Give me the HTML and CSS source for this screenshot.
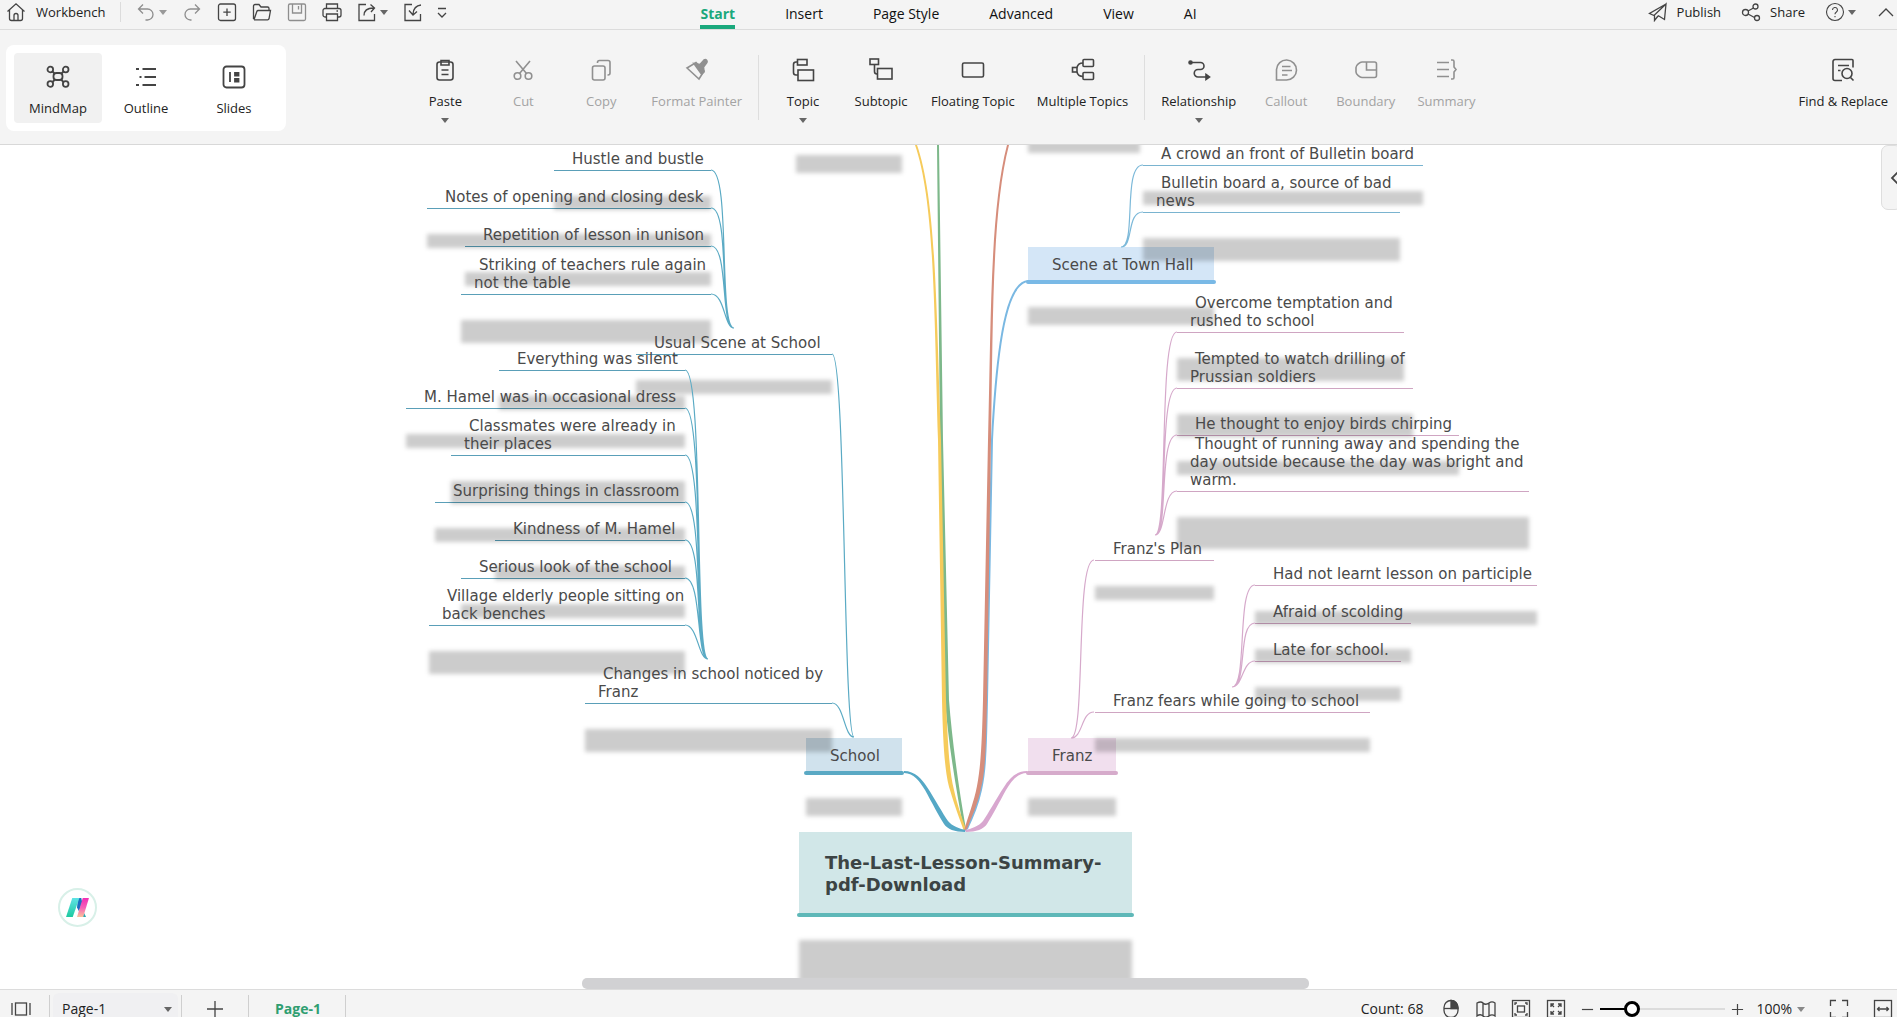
FILE: index.html
```html
<!DOCTYPE html>
<html lang="en">
<head>
<meta charset="utf-8">
<meta name="viewport" content="width=device-width, initial-scale=1">
<title>The-Last-Lesson-Summary-pdf-Download</title>
<link rel="stylesheet" href="styles.css">
</head>
<body>
<header class="topbar">
  <div class="quick">
    <button class="link-btn"><svg class="icon" viewBox="0 0 20 20"><path d="M1.5 9.500 10 1.800l8.500 7.700M3.500 8v8.500a2 2 0 0 0 2 2h9a2 2 0 0 0 2-2V8M8 18.500v-5a2 2 0 0 1 4 0v5"/></svg>Workbench</button>
    <span class="divider"></span>
    <span class="pair muted"><button class="icon-btn" aria-label="Undo"><svg class="icon" viewBox="0 0 20 20"><path d="M7 2.500 2.500 7 7 11.500M2.500 7h9a5.500 5.500 0 0 1 0 11H9.500"/></svg></button><i class="caret"></i></span>
    <button class="icon-btn muted" aria-label="Redo"><svg class="icon" viewBox="0 0 20 20"><path d="M13 2.500 17.500 7 13 11.500M17.500 7h-9a5.500 5.500 0 0 0 0 11h1"/></svg></button>
    <button class="icon-btn" aria-label="New"><svg class="icon" viewBox="0 0 20 20"><rect x="1.500" y="2" width="17" height="16.500" rx="2"/><path d="M10 6.500v7.500M6.300 10.200h7.400"/></svg></button>
    <button class="icon-btn" aria-label="Open"><svg class="icon" viewBox="0 0 20 20"><path d="M1.500 17V4a1.500 1.500 0 0 1 1.500-1.500h4l2 2.500h6.500A1.500 1.500 0 0 1 17 6.500v2M2 17.800 4.800 9.500a1.500 1.500 0 0 1 1.400-1h12.300L17 16.800a1.500 1.500 0 0 1-1.500 1H2"/></svg></button>
    <button class="icon-btn muted" aria-label="Save"><svg class="icon" viewBox="0 0 20 20"><rect x="1.500" y="2" width="17" height="16.500" rx="1.500"/><path d="M5.500 2v9h9V2M11.500 4v3.500"/></svg></button>
    <button class="icon-btn" aria-label="Print"><svg class="icon" viewBox="0 0 20 20"><path d="M4.500 6.500V2h11v4.500M4.500 15H3a2 2 0 0 1-2-2V8.500a2 2 0 0 1 2-2h14a2 2 0 0 1 2 2V13a2 2 0 0 1-2 2h-1.500M4.500 12h11v6.500h-11zM14.500 9h1.500"/></svg></button>
    <span class="pair"><button class="icon-btn" aria-label="Export"><svg class="icon" viewBox="0 0 20 20"><path d="M9 2.500H2v16h15.500V12M7 13.500c0-5 3.500-7.500 9.500-7.500M13.500 2.500 17.500 6l-3.500 4"/></svg></button><i class="caret"></i></span>
    <button class="icon-btn" aria-label="Import"><svg class="icon" viewBox="0 0 20 20"><path d="M9 2.500H2v16h15.500V12M18 3c-5 .5-7.500 3-8 9M6 8.500l4 4.500 4-3.500"/></svg></button>
    <button class="icon-btn more" aria-label="More"><svg class="icon" viewBox="0 0 20 20"><path d="M6 6.500h8M6 11l4 4 4-4"/></svg></button>
  </div>
  <nav class="tabs">
    <a class="tab active" href="#start">Start</a>
    <a class="tab" href="#insert">Insert</a>
    <a class="tab" href="#page-style">Page Style</a>
    <a class="tab" href="#advanced">Advanced</a>
    <a class="tab" href="#view">View</a>
    <a class="tab" href="#ai">AI</a>
  </nav>
  <div class="account">
    <button class="link-btn"><svg class="icon" viewBox="0 0 20 20"><path d="M18 2 1.500 11.500l4.500 2L18 2l-1.500 15.500-6.500-4M6.500 13.500v5l3.500-4.500"/></svg>Publish</button>
    <button class="link-btn"><svg class="icon" viewBox="0 0 20 20"><circle cx="4.500" cy="10.500" r="3"/><circle cx="14.500" cy="4.500" r="2.500"/><circle cx="16" cy="16" r="2.500"/><path d="m7 9 5.500-3M7 12l6.500 3.500"/></svg>Share</button>
    <span class="pair"><button class="icon-btn" aria-label="Help"><svg class="icon thin" viewBox="0 0 20 20"><circle cx="10" cy="10" r="8.500"/><path d="M7.500 8a2.500 2.500 0 1 1 3.700 2.200c-.8.500-1.200.9-1.200 2M10 14v1.200"/></svg></button><i class="caret"></i></span>
    <button class="icon-btn" aria-label="Collapse ribbon"><svg class="icon" viewBox="0 0 20 20"><path d="m3 14 7-7 7 7"/></svg></button>
  </div>
</header>

<section class="ribbon">
  <div class="side">
    <div class="modes">
      <button class="mode active"><svg class="icon heavy" viewBox="0 0 24 24"><rect x="7.500" y="8" width="9" height="7" rx="3"/><circle cx="4.300" cy="4.500" r="2.800"/><circle cx="19.700" cy="4.500" r="2.800"/><circle cx="4.300" cy="19" r="2.800"/><circle cx="19.700" cy="19" r="2.800"/><path d="m6.500 6.500 2.500 2.500M17.500 6.500 15 9M6.500 17 9 14.500M17.500 17 15 14.500"/></svg>MindMap</button>
      <button class="mode"><svg class="icon heavy" viewBox="0 0 24 24"><path d="M2 4h3M8.500 4H22M5.500 12h2M10.500 12H22M2 20h3M8.500 20H22"/></svg>Outline</button>
      <button class="mode"><svg class="icon heavy" viewBox="0 0 24 24"><rect x="1.500" y="1.500" width="21" height="21" rx="3"/><path d="M8 7v10"/><path class="solid" d="M13 8h3.500v2.500H13zM13 14h3.500v2.500H13z"/></svg>Slides</button>
    </div>
  </div>
  <div class="tools">
    <button class="tool"><svg class="icon" viewBox="0 0 24 24"><rect x="4" y="4" width="16" height="18" rx="2.500"/><path d="M8 2.500h8V7H8zM8.500 12h7M8.500 16.500h7"/></svg>Paste<i class="caret"></i></button>
    <button class="tool" disabled><svg class="icon" viewBox="0 0 24 24"><circle cx="6.500" cy="18" r="3.300"/><circle cx="17.500" cy="18" r="3.300"/><path d="m5 3 10.500 12.500M19 3 8.500 15.500"/></svg>Cut</button>
    <button class="tool" disabled><svg class="icon" viewBox="0 0 24 24"><rect x="3.500" y="8" width="12.500" height="14" rx="2"/><path d="M8.500 5V4.500a2 2 0 0 1 2-2H19a2 2 0 0 1 2 2V15a2 2 0 0 1-2 2h-.5"/></svg>Copy</button>
    <button class="tool" disabled><svg class="icon" viewBox="0 0 24 24"><path d="m2 10 9-5.500 8 8.500-5 8z"/><path class="solid" d="m9 5.500 6 1L19 2c2-1.500 4 1 2.500 3L18.500 9l.5 5-2.500 2z"/></svg>Format Painter</button>
    <span class="tool-divider"></span>
    <button class="tool"><svg class="icon" viewBox="0 0 24 24"><rect x="6.500" y="1.500" width="9.500" height="5.500"/><rect x="7" y="12" width="15.500" height="10.500"/><path d="M6.500 4H5a2.500 2.500 0 0 0-2.500 2.500v8A2.500 2.500 0 0 0 5 17h2"/></svg>Topic<i class="caret"></i></button>
    <button class="tool"><svg class="icon" viewBox="0 0 24 24"><rect x="1" y="1" width="8.500" height="5.500"/><rect x="8.500" y="10.500" width="14.500" height="10.500"/><path d="M5.500 6.500v7a2.500 2.500 0 0 0 2.500 2.500h.5"/></svg>Subtopic</button>
    <button class="tool"><svg class="icon" viewBox="0 0 24 24"><rect x="1.500" y="5" width="21" height="14" rx="1.500"/></svg>Floating Topic</button>
    <button class="tool"><svg class="icon" viewBox="0 0 24 24"><rect x="12" y="1.500" width="10.500" height="7" rx="1"/><rect x="12" y="14.500" width="10.500" height="7" rx="1"/><rect x="1.500" y="9.500" width="4.500" height="4.500"/><path d="M12 5C7.500 5 6.500 7 6 9.500M12 18.500c-4.500 0-5.500-2-6-4.500"/></svg>Multiple Topics</button>
    <span class="tool-divider"></span>
    <button class="tool"><svg class="icon" viewBox="0 0 24 24"><path d="M3.500 4.500h10a3.500 3.500 0 0 1 0 7H11a3.700 3.700 0 0 0 0 7.500h10"/><circle class="solid" cx="3.500" cy="4.500" r="1.500"/><path class="solid" d="m19 16.500 3.500 2.500-3.500 2.500z"/></svg>Relationship<i class="caret"></i></button>
    <button class="tool" disabled><svg class="icon" viewBox="0 0 24 24"><path d="M2.500 22V11.500A10 10 0 1 1 12.500 22zM8 8.500h8.500M8 12.500h10M8 17h5.500"/></svg>Callout</button>
    <button class="tool" disabled><svg class="icon" viewBox="0 0 24 24"><path d="M8 4h12.500a2 2 0 0 1 2 2v11.500a2 2 0 0 1-2 2H8c-2 0-6-3-6-5.500V9.500C2 7 6 4 8 4zM12.500 4v8h10"/></svg>Boundary</button>
    <button class="tool" disabled><svg class="icon" viewBox="0 0 24 24"><path d="M2 4.500h12M2 11.500h12M2 18.500h12M16 2h1.500A1.500 1.500 0 0 1 19 3.500V9l2 2.500-2 2.500v5.500a1.500 1.500 0 0 1-1.500 1.500H16"/></svg>Summary</button>
  </div>
  <div class="side end">
    <button class="tool find"><svg class="icon heavy" viewBox="0 0 24 24"><path d="M11 22.500H4A2 2 0 0 1 2 20.500v-17a2 2 0 0 1 2-2h17a1 1 0 0 1 1 1v7M7 7.500h11M7 12.500h2.500"/><circle cx="16" cy="15.500" r="5"/><path d="m19.500 19.500 3 3"/></svg>Find &amp; Replace</button>
  </div>
</section>

<main class="canvas">
  <div class="stage">
    <svg class="links" viewBox="348 145 1201 844" aria-hidden="true">
      <g class="teal">
        <path d="M711 170C731 170 718 328 734 328M711 208C731 208 718 328 734 328M711 246C729 246 720 328 734 328M711 294C725 294 724 328 734 328"/>
        <path d="M685 370C704 370 694 659 708 659M685 408C704 408 694 659 708 659M685 455C704 455 694 659 708 659M685 502C704 502 694 659 708 659M685 540C704 540 694 659 708 659M685 578C702 578 696 659 708 659M685 625C698 625 698 659 708 659"/>
        <path d="M832 354C846 354 843 737 854 737M832 703C844 703 844 737 854 737"/>
      </g>
      <g class="sky">
        <path d="M1143 165C1122 165 1137 247 1121 247M1143 212C1126 212 1134 247 1121 247"/>
      </g>
      <g class="pink">
        <path d="M1177 332C1158 332 1169 535 1155 535M1177 388C1158 388 1169 535 1155 535M1177 435C1158 435 1169 535 1155 535M1177 491C1162 491 1166 535 1155 535"/>
        <path d="M1255 585C1236 585 1248 687 1232 687M1255 623C1237 623 1248 687 1232 687M1255 661C1242 661 1243 687 1232 687"/>
        <path d="M1094 560C1075 560 1086 738 1071 738M1094 712C1081 712 1083 738 1071 738"/>
      </g>
      <path class="sky-fill" d="M1028 280C1004 282 996 350 991 440L985 700C984 740 984 765 979 790C976 802 970 816 965 831L968 829C974 816 979 804 982 790C987 768 987 740 988 700L993 440C998 350 1006 285 1028 282Z"/>
      <path class="green-fill" d="M937 145L940 440L945 700C948 740 956 790 964 831L966 829C959 790 952 740 949 700L943 440L939 145Z"/>
      <path class="yellow-fill" d="M915 145C934 200 934 300 938 440L942 700C943 745 945 775 950 790C954 804 960 820 964 831L966 829C962 818 957 804 954 790C949 770 948 745 946 700L941 440C936 300 936 200 917 145Z"/>
      <path class="red-fill" d="M1007 145C990 210 991 320 988 440L983 700C982 740 981 765 977 786C974 802 968 816 964 831L967 829C972 816 978 804 981 788C986 768 986 740 987 700L991 440C993 320 992 210 1009 145Z"/>
      <path class="teal-fill" d="M904 771C915 771 922 779 927 787C935 799 943 814 948 821C952 826 960 829 966 830L965 832C955 832 947 829 944 824C939 816 932 803 925 790C920 782 914 773 904 773Z"/>
      <path class="pink-fill" d="M1027 771C1016 771 1009 779 1004 787C996 799 988 814 983 821C979 826 971 829 965 830L966 832C976 832 984 829 987 824C992 816 999 803 1006 790C1011 782 1017 773 1027 773Z"/>
    </svg>

    <div class="ghost" style="left:448px;top:10px;width:106px"></div>
    <div class="ghost" style="left:680px;top:-10px;width:112px"></div>

    <div class="node teal" style="left:206px;top:-3px;width:157px"><p>Hustle and bustle</p></div>
    <div class="node teal" style="left:79px;top:35px;width:284px"><p>Notes of opening and closing desk</p></div>
    <div class="node teal" style="left:117px;top:73px;width:246px"><p>Repetition of lesson in unison</p></div>
    <div class="node teal" style="left:113px;top:103px;width:250px"><p>Striking of teachers rule again<br>not the table</p></div>
    <div class="node teal" style="left:288px;top:181px;width:196px"><p>Usual Scene at School</p></div>
    <div class="node teal" style="left:151px;top:197px;width:186px"><p>Everything was silent</p></div>
    <div class="node teal" style="left:58px;top:235px;width:279px"><p>M. Hamel was in occasional dress</p></div>
    <div class="node teal" style="left:103px;top:264px;width:234px"><p>Classmates were already in<br>their places</p></div>
    <div class="node teal" style="left:87px;top:329px;width:250px"><p>Surprising things in classroom</p></div>
    <div class="node teal" style="left:147px;top:367px;width:190px"><p>Kindness of M. Hamel</p></div>
    <div class="node teal" style="left:113px;top:405px;width:224px"><p>Serious look of the school</p></div>
    <div class="node teal" style="left:81px;top:434px;width:256px"><p>Village elderly people sitting on<br>back benches</p></div>
    <div class="node teal" style="left:237px;top:512px;width:247px"><p>Changes in school noticed by<br>Franz</p></div>

    <div class="node sky" style="left:795px;top:-8px;width:280px"><p>A crowd an front of Bulletin board</p></div>
    <div class="node sky" style="left:795px;top:21px;width:257px"><p>Bulletin board a, source of bad<br>news</p></div>
    <div class="node pink" style="left:829px;top:141px;width:227px"><p>Overcome temptation and<br>rushed to school</p></div>
    <div class="node pink" style="left:829px;top:197px;width:236px"><p>Tempted to watch drilling of<br>Prussian soldiers</p></div>
    <div class="node pink" style="left:829px;top:262px;width:282px"><p>He thought to enjoy birds chirping</p></div>
    <div class="node pink" style="left:829px;top:282px;width:352px"><p>Thought of running away and spending the<br>day outside because the day was bright and<br>warm.</p></div>
    <div class="node pink" style="left:747px;top:387px;width:119px"><p>Franz's Plan</p></div>
    <div class="node pink" style="left:907px;top:412px;width:282px"><p>Had not learnt lesson on participle</p></div>
    <div class="node pink" style="left:907px;top:450px;width:156px"><p>Afraid of scolding</p></div>
    <div class="node pink" style="left:907px;top:488px;width:146px"><p>Late for school.</p></div>
    <div class="node pink" style="left:747px;top:539px;width:275px"><p>Franz fears while going to school</p></div>

    <div class="box school" style="left:458px;top:593px;width:96px"><p>School</p></div>
    <div class="box franz" style="left:680px;top:593px;width:88px"><p>Franz</p></div>
    <div class="box town" style="left:680px;top:102px;width:186px"><p>Scene at Town Hall</p></div>
    <div class="box root" style="left:451px;top:687px;width:333px"><h1>The-Last-Lesson-Summary-<br>pdf-Download</h1></div>
  </div>

  <button class="panel-handle" aria-label="Open side panel"><svg class="icon heavy" viewBox="0 0 20 20"><path d="m13 4-6 6 6 6"/></svg></button>
  <button class="assistant" aria-label="AI assistant">
    <svg viewBox="0 0 26 22"><defs>
      <linearGradient id="g1" x1="0" y1="0" x2="0" y2="1"><stop offset="0" stop-color="#5fe3e6"/><stop offset="1" stop-color="#1fc9a0"/></linearGradient>
      <linearGradient id="g2" x1="0" y1="0" x2="0" y2="1"><stop offset="0" stop-color="#f02fb4"/><stop offset=".5" stop-color="#f560b8"/><stop offset="1" stop-color="#fbc39a"/></linearGradient></defs>
      <path d="M13.500 1h3.500l1 5-3.500 9-2-4z" fill="#1b6fc0"/><path d="m19.500 16 2.500 5h-5z" fill="#2aa7b0"/>
      <path d="M7.500 1H15L8 21H1z" fill="url(#g1)"/><path d="M18.500 1H25l-6 20h-6.500z" fill="url(#g2)"/></svg>
  </button>
  <div class="scrollbar"></div>
</main>

<footer class="status">
  <div class="status-row">
    <button class="icon-btn" aria-label="Pages panel"><svg class="icon" viewBox="0 0 20 20"><rect x="4.500" y="4" width="11" height="12"/><path d="M1 4v12M19 4v12"/></svg></button>
    <span class="bar-sep first"></span>
    <label class="page-pick"><select aria-label="Page"><option>Page-1</option></select><i class="caret"></i></label>
    <span class="bar-sep"></span>
    <button class="add" aria-label="Add page"><svg class="icon" viewBox="0 0 20 20"><path d="M10 2v16M2 10h16"/></svg></button>
    <span class="bar-sep"></span>
    <button class="page-tab">Page-1</button>
    <span class="bar-sep"></span>
    <div class="status-end">
      <span class="count">Count: 68</span>
      <button class="icon-btn" aria-label="Mouse mode"><svg class="icon" viewBox="0 0 20 20"><rect x="3" y="1.500" width="14" height="17" rx="7"/><path d="M3 9.500h14"/><path class="solid" d="M10 1.500c4 0 7 3 7 8h-7z"/></svg></button>
      <button class="icon-btn" aria-label="Overview"><svg class="icon" viewBox="0 0 20 20"><path d="M1 4c3-1.500 4.500-1.500 6 0s4 1.500 6 0 4-1.500 6 0v13c-2-1.500-4-1.500-6 0s-4.500 1.500-6 0-4-1.500-6 0zM7 4v13M13 4v13"/></svg></button>
      <button class="icon-btn" aria-label="Fit page"><svg class="icon" viewBox="0 0 20 20"><rect x="1.500" y="1.500" width="17" height="17"/><rect x="6.500" y="7" width="7" height="6"/><path d="M4 6V4h2M14 4h2v2M16 14v2h-2M6 16H4v-2"/></svg></button>
      <button class="icon-btn" aria-label="Fit map"><svg class="icon" viewBox="0 0 20 20"><rect x="1.500" y="1.500" width="17" height="17"/><path d="M5 8V5h3M5 5l3 3M12 5h3v3M15 5l-3 3M15 12v3h-3M15 15l-3-3M8 15H5v-3M5 15l3-3"/></svg></button>
      <span class="zoom">
        <button class="step" aria-label="Zoom out"><svg class="icon" viewBox="0 0 14 14"><path d="M1 7h12"/></svg></button>
        <input type="range" min="0" max="100" value="22" aria-label="Zoom">
        <button class="step" aria-label="Zoom in"><svg class="icon" viewBox="0 0 14 14"><path d="M1 7h12M7 1v12"/></svg></button>
      </span>
      <button class="zoom-value">100%<i class="caret"></i></button>
      <button class="icon-btn wide" aria-label="Full screen"><svg class="icon" viewBox="0 0 20 20"><path d="M1.500 7V1.500H7M13 1.500h5.500V7M18.500 13v5.500H13M7 18.500H1.500V13"/></svg></button>
      <button class="icon-btn" aria-label="Fit width"><svg class="icon" viewBox="0 0 20 20"><rect x="1.500" y="1.500" width="17" height="17"/><path d="M4.500 10h11M6.500 8l-2 2 2 2M13.500 8l2 2-2 2"/></svg></button>
    </div>
  </div>
</footer>
</body>
</html>
```

FILE: styles.css
```css
* { box-sizing: border-box; }

body {
  margin: 0;
  height: 100vh;
  display: flex;
  flex-direction: column;
  overflow: hidden;
  background: #fff;
  color: #222;
  font: 13px/18px "Open Sans", "Noto Sans", sans-serif;
}

button, select {
  margin: 0;
  padding: 0;
  border: 0;
  background: none;
  color: inherit;
  font: inherit;
}

p, h1 { margin: 0; }

.icon {
  display: block;
  width: 20px;
  height: 20px;
  flex: none;
  fill: none;
  stroke: currentColor;
  stroke-width: 1.3;
  color: #444;
}
.icon.thin { stroke-width: 1.1; }
.icon.heavy { stroke-width: 1.8; }
.icon .solid { fill: currentColor; }
.muted .icon { color: #8e8e8e; }
.muted .caret { border-top-color: #999; }

.caret {
  display: block;
  width: 0;
  height: 0;
  border: 4px solid transparent;
  border-top: 5px solid #666;
  border-bottom: 0;
}

/* Top bar */
.topbar {
  flex: none;
  display: grid;
  grid-template-columns: 1fr auto 1fr;
  height: 30px;
  background: #f4f4f4;
  border-bottom: 1px solid #dcdcdc;
}
.quick, .account {
  display: flex;
  align-items: center;
  padding-bottom: 5px;
}
.quick { gap: 15px; padding-left: 6px; }
.account { gap: 20px; justify-content: flex-end; padding-right: 1px; }
.link-btn { display: flex; align-items: center; gap: 10px; }
.account .link-btn { gap: 9px; }
.divider { width: 1px; height: 20px; background: #dcdcdc; }
.pair { display: flex; align-items: center; gap: 3px; }
.more { margin-left: -6px; }
.tabs { display: flex; gap: 50px; }
.tab {
  padding-top: 5px;
  color: #111;
  font-size: 14px;
  text-decoration: none;
}
.tab.active {
  color: #1aa87c;
  font-weight: 700;
  border-bottom: 4px solid #1aa87c;
  border-radius: 3px 3px 0 0;
}

/* Ribbon */
.ribbon {
  flex: none;
  display: grid;
  grid-template-columns: 1fr auto 1fr;
  height: 115px;
  background: #f4f4f4;
  border-bottom: 1px solid #d8d8d8;
}
.side { display: flex; align-items: flex-start; padding: 15px 9px 0 6px; }
.side.end { justify-content: flex-end; padding-top: 0; }
.modes {
  display: flex;
  padding: 8px;
  background: #fff;
  border-radius: 8px;
}
.mode {
  display: flex;
  flex-direction: column;
  align-items: center;
  gap: 10px;
  width: 88px;
  height: 70px;
  padding-top: 12px;
  border-radius: 4px;
}
.mode .icon, .tool .icon { width: 24px; height: 24px; }
.mode.active { background: #f1f1f1; }
.tools { display: flex; padding-right: 4px; }
.tool {
  display: flex;
  flex-direction: column;
  align-items: center;
  gap: 10px;
  min-width: 78px;
  padding: 28px 11px 0;
  white-space: nowrap;
}
.tool .icon { stroke-width: 1.6; }
.tool .caret { margin-top: -2px; }
.tool:disabled { color: #a3a3a3; }
.tool:disabled .icon { color: #909090; }
.tool.find { padding: 28px 0 0; }
.tool-divider { width: 1px; height: 65px; margin: 25px 5px 0; background: #dedede; }

/* Canvas */
.canvas {
  position: relative;
  flex: 1;
  display: flex;
  justify-content: center;
  overflow: hidden;
  background: #fff;
}
.stage {
  position: relative;
  flex: none;
  width: 1201px;
  color: #444;
  font: 15px/18px "DejaVu Sans", sans-serif;
}
.links {
  position: absolute;
  z-index: 2;
  left: 0;
  top: 0;
  width: 1201px;
  height: 844px;
  fill: none;
  stroke-width: 1.2;
}
.links .teal { stroke: #5aaac4; }
.links .sky { stroke: #7cb9d9; }
.links .pink { stroke: #d6a9cb; }
.teal-fill { fill: #55a8c6; }
.sky-fill { fill: #7ab8e2; }
.pink-fill { fill: #d8a7cf; }
.green-fill { fill: #7db88a; }
.yellow-fill { fill: #f6cb5b; }
.red-fill { fill: #d68d7b; }

.node, .box, .ghost { position: absolute; white-space: nowrap; }
.node {
  padding: 8px 13px 2px;
  border-bottom: 1px solid;
  text-indent: 5px;
}
.node p, .box p, .box h1 { position: relative; z-index: 2; color: #4a4a4a; }
.node.teal { border-color: #5a9fb8; }
.node.sky { border-color: #7ab4d0; }
.node.pink { border-color: #cfa5c2; }

/* Drop shadows lie over the filled boxes but under links and text */
.node::after, .box::after, .ghost::after {
  content: "";
  position: absolute;
  z-index: 1;
  left: 0;
  top: calc(100% + 26px);
  width: 100%;
  height: 50%;
  background: rgba(0, 0, 0, .2);
  filter: blur(2px);
}
.box::after { top: calc(100% + 25px); }
.ghost { height: 18px; }
.ghost::after { top: 0; height: 100%; }

.box { height: 35px; padding: 9px 24px; }
.box::before {
  content: "";
  position: absolute;
  left: -2px;
  right: -2px;
  bottom: -2px;
  height: 4px;
  border-radius: 2px;
  background: var(--line);
}
.box.school { background: #d0e2ed; --line: #5aa9c4; }
.box.franz { background: #f1dfee; --line: #d6abcb; }
.box.town { background: #d4e6f7; --line: #79b9e6; }
.box.root { height: 83px; padding: 20px 26px; background: #d1e7e8; --line: #5eb8b8; }
.box.root h1 { font-size: 18px; line-height: 22px; font-weight: 700; color: #3c4444; }

.scrollbar {
  position: absolute;
  left: 582px;
  right: 588px;
  bottom: 0;
  z-index: 3;
  height: 11px;
  border-radius: 5px;
  background: #d1d1d3;
}
.panel-handle {
  position: absolute;
  right: -5px;
  top: 0;
  width: 21px;
  height: 65px;
  padding-left: 3px;
  border: 1px solid #dedede;
  border-radius: 7px;
  background: #f4f4f4;
}
.assistant {
  position: absolute;
  left: 58px;
  bottom: 62px;
  display: flex;
  align-items: center;
  justify-content: center;
  width: 39px;
  height: 39px;
  border: 2px solid #d8f0e8;
  border-radius: 50%;
  background: #fff;
}
.assistant svg { width: 25px; height: 21px; flex: none; }

/* Status bar */
.status {
  flex: none;
  height: 28px;
  overflow: hidden;
  background: #f4f4f4;
  border-top: 1px solid #dcdcdc;
  font-size: 14px;
  line-height: 16px;
}
.status-row {
  display: flex;
  align-items: center;
  height: 38px;
  padding: 0 4px 0 11px;
}
.bar-sep { width: 1px; height: 28px; background: #cfcfcf; }
.bar-sep.first { margin-left: 18px; }
.page-pick {
  display: flex;
  align-items: center;
  width: 125px;
  height: 32px;
  margin: 0 3px;
  padding-left: 9px;
  border-radius: 6px;
  background: #f0f0f2;
}
.page-pick select { appearance: none; flex: 1; outline: 0; color: #222; }
.page-pick .caret { margin-right: 6px; }
.add { width: 66px; display: flex; justify-content: center; }
.page-tab { padding: 0 24px 0 26px; color: #2f9e70; font-weight: 700; }
.status-end {
  flex: 1;
  display: flex;
  align-items: center;
  justify-content: flex-end;
  gap: 15px;
}
.count { margin-right: 3px; }
.zoom { display: flex; align-items: center; gap: 6px; }
.step .icon { width: 13px; height: 13px; }
.zoom input {
  appearance: none;
  width: 125px;
  height: 16px;
  margin: 0;
  background: linear-gradient(to right, #000 26%, #dcdcdc 26%) center / 100% 2px no-repeat;
}
.zoom input::-webkit-slider-thumb {
  appearance: none;
  width: 16px;
  height: 16px;
  border: 3px solid #000;
  border-radius: 50%;
  background: #fff;
}
.zoom-value { display: flex; align-items: center; gap: 5px; margin-left: -3px; }
.zoom-value .caret { border-top-color: #888; }
.wide { margin: 0 9px; }
```
